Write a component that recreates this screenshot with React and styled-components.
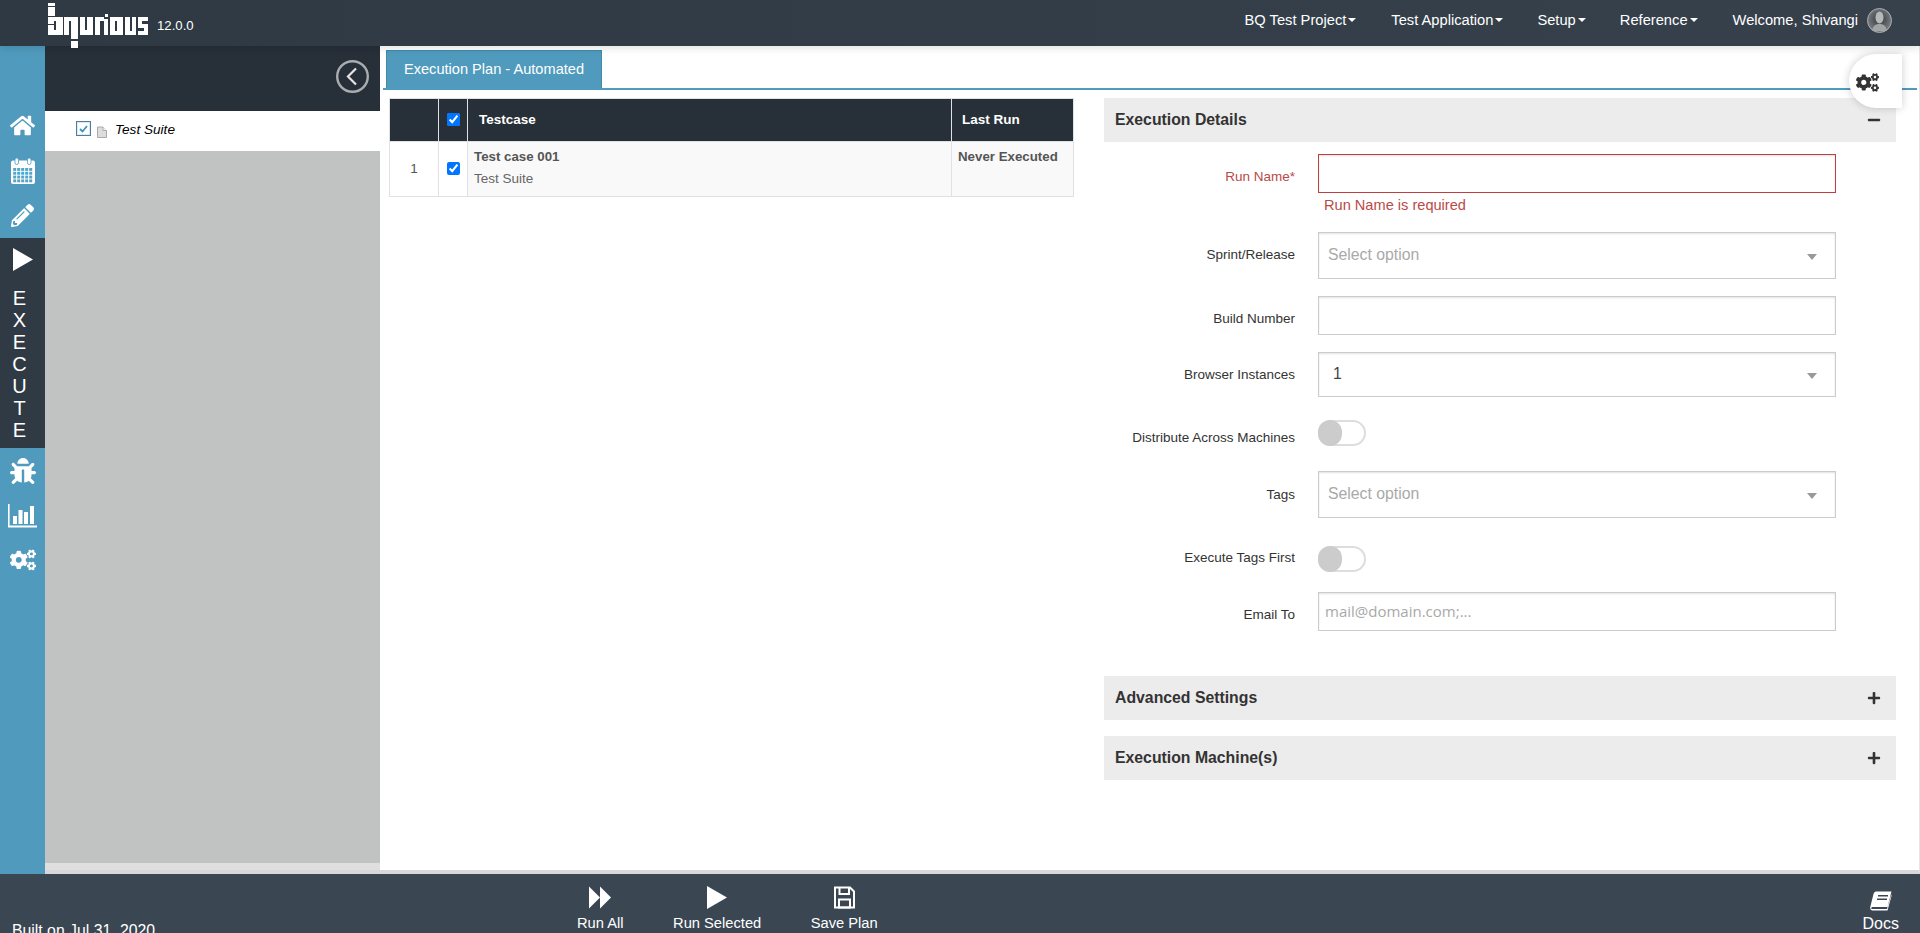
import React from 'react';
import styled, { createGlobalStyle } from 'styled-components';
import { FaHome, FaPencilAlt, FaBug, FaCogs, FaPlus, FaMinus } from 'react-icons/fa';

const GlobalStyle = createGlobalStyle`
  * { box-sizing: border-box; }
  html, body { margin: 0; height: 100%; overflow: hidden; }
  body { font-family: "Liberation Sans", Arial, sans-serif; font-size: 14px; color: #333; background: #fff; }
`;

const Page = styled.div`
  display: flex;
  flex-direction: column;
  height: 933px;
  overflow: hidden;
`;

/* top bar */
const TopBar = styled.header`
  position: relative;
  z-index: 2;
  flex: 0 0 46px;
  height: 46px;
  display: flex;
  align-items: flex-start;
  padding-left: 48px;
  background: linear-gradient(90deg, #2e3944, #36414c);
  color: #fff;
  box-shadow: 0 2px 8px rgba(0, 0, 0, .12);
`;
const LogoMark = styled.svg`
  width: 100px;
  height: 45px;
  margin-top: 3px;
  overflow: visible;
  flex: none;
`;
const Version = styled.span`
  margin: 18px 0 0 9px;
  font-size: 13.200px;
  line-height: 16px;
`;
const Nav = styled.nav`
  margin-left: auto;
  display: flex;
  align-items: center;
  height: 40px;
  padding-right: 28px;
`;
const NavItem = styled.span`
  display: flex;
  align-items: center;
  margin-left: ${p => p.$gap}px;
  font-size: 14.700px;
  white-space: nowrap;
  &::after {
    content: "";
    margin-left: 2px;
    border-top: 4px solid #fff;
    border-left: 4px solid transparent;
    border-right: 4px solid transparent;
  }
`;
const Welcome = styled.span`
  margin-left: 35px;
  font-size: 14.700px;
  white-space: nowrap;
`;
const Avatar = styled.svg`
  width: 25px;
  height: 25px;
  margin-left: 9px;
`;

/* middle */
const Middle = styled.div`
  flex: 1;
  min-height: 0;
  display: flex;
`;
const Rail = styled.aside`
  flex: 0 0 45px;
  display: flex;
  flex-direction: column;
  background: #4f9abd;
  color: #fff;
  padding-top: 56px;
`;
const RailIcon = styled.div`
  height: ${p => p.$h}px;
  display: flex;
  justify-content: center;
  align-items: center;
  font-size: ${p => p.$size}px;
`;
const RailActive = styled.div`
  height: 210px;
  background: #2f3a44;
  display: flex;
  flex-direction: column;
  align-items: center;
  padding: 10px 6px 0 0;
  font-size: 20px;
  svg { margin: 0 -6px 16px 0; }
`;
const RailLetter = styled.span`
  height: 22px;
  line-height: 22px;
`;

const TreePanel = styled.section`
  flex: 0 0 335px;
  display: flex;
  flex-direction: column;
  background: #dfdfdf;
  padding-bottom: 7px;
  border-bottom: 4px solid #d8d8d8;
`;
const TreeHead = styled.div`
  flex: 0 0 65px;
  background: #272f39;
  display: flex;
  justify-content: flex-end;
  padding: 14px 11px 0 0;
`;
const Collapse = styled.svg`
  width: 33px;
  height: 33px;
`;
const TreeRow = styled.div`
  flex: 0 0 40px;
  background: #fff;
  display: flex;
  align-items: center;
  padding: 0 0 3px 31px;
  color: #000;
  font-style: italic;
  font-size: 13.600px;
`;
const TreeCheck = styled.span`
  width: 15px;
  height: 15px;
  margin-bottom: 2px;
  border: 1px solid #4a7ea5;
  box-shadow: inset 0 0 0 1px #dfe9f1;
  display: flex;
  align-items: center;
  justify-content: center;
`;
const DocIcon = styled.svg`
  width: 10px;
  height: 12px;
  margin: 5px 8px 0 6px;
`;
const TreeFill = styled.div`
  flex: 1;
  background: #c1c3c2;
`;

/* main */
const Main = styled.main`
  position: relative;
  flex: 1;
  min-width: 0;
  padding: 4px 2px 0 3px;
  border-bottom: 4px solid #d8d8d8;
  border-right: 1px solid #e4e4e4;
`;
const TabBar = styled.div`
  height: 40px;
  display: flex;
  align-items: flex-end;
  padding-left: 3px;
  border-bottom: 2px solid #4f9abd;
`;
const Tab = styled.div`
  width: 216px;
  height: 38px;
  padding-bottom: 2px;
  background: #4f9abd;
  border: 1px solid #4288a9;
  border-bottom: 0;
  color: #fff;
  font-size: 14.600px;
  display: flex;
  align-items: center;
  justify-content: center;
`;
const GearTab = styled.div`
  position: absolute;
  top: 8px;
  right: 17px;
  width: 53px;
  height: 54px;
  padding: 17px 0 0 7px;
  background: #fff;
  border-radius: 27px 0 0 27px;
  box-shadow: 0 0 8px rgba(0, 0, 0, .2);
  color: #333;
  font-size: 23px;
  line-height: 0;
`;
const Columns = styled.div`
  display: flex;
  padding: 8px 21px 0 6px;
`;
const LeftCol = styled.div`
  flex: 0 0 685px;
`;
const RightCol = styled.div`
  margin-left: 30px;
  flex: 1;
`;
const Table = styled.table`
  width: 685px;
  table-layout: fixed;
  border-collapse: collapse;
  font-size: 13.500px;
`;
const Th = styled.th`
  width: ${p => p.$w ? `${p.$w}px` : 'auto'};
  height: 43px;
  padding: 0 0 2px ${p => p.$pad || 0}px;
  background: #272f39;
  color: #fff;
  text-align: left;
  border: 1px solid #dee2e6;
  font-weight: 700;
`;
const Td = styled.td`
  height: 55px;
  padding: ${p => p.$pad || '0 0 2px'};
  vertical-align: ${p => p.$top ? 'top' : 'middle'};
  text-align: ${p => p.$center ? 'center' : 'left'};
  background: ${p => p.$plain ? '#fff' : '#f9f9f9'};
  border: 1px solid #dee2e6;
  color: #555;
`;
const Check = styled.input`
  display: block;
  margin: 0 auto;
  width: 13px;
  height: 13px;
`;
const CaseName = styled.div`
  font-weight: 700;
  font-size: 13.300px;
  line-height: 20px;
`;
const CaseSuite = styled.div`
  margin-top: 2px;
  line-height: 20px;
  color: #666;
`;

const SectionHead = styled.div`
  height: 44px;
  margin-bottom: ${p => p.$after || 0}px;
  padding: 0 15px 0 11px;
  background: #ececec;
  display: flex;
  align-items: center;
  justify-content: space-between;
  font-size: 15.800px;
  font-weight: 700;
  color: #333;
  svg { font-size: 14px; }
`;
const Form = styled.div`
  padding-top: 12px;
`;
const Field = styled.div`
  display: grid;
  grid-template-columns: 191px 518px;
  column-gap: 23px;
  margin-bottom: ${p => p.$after}px;
`;
const Label = styled.label`
  height: ${p => p.$h}px;
  padding-top: ${p => p.$shift > 0 ? p.$shift : 0}px;
  padding-bottom: ${p => p.$shift < 0 ? -p.$shift : 0}px;
  display: flex;
  align-items: center;
  justify-content: flex-end;
  font-size: 13.500px;
  color: ${p => p.$error ? '#b94a48' : '#333'};
  white-space: nowrap;
`;
const TextBox = styled.input`
  display: block;
  width: 100%;
  height: ${p => p.$h}px;
  padding: 0 6px 2px;
  border: ${p => p.$error ? '1px solid #c13e3e' : '1px solid #ccc'};
  border-radius: 0;
  box-shadow: inset 0 1px 2px rgba(0, 0, 0, .12);
  background: #fff;
  outline: none;
  font-family: "Open Sans", sans-serif;
  font-size: 15px;
  &::placeholder { color: #a9a9a9; opacity: 1; }
`;
const ErrorText = styled.div`
  margin: 3px 0 0 6px;
  height: 19px;
  line-height: 19px;
  font-size: 14.600px;
  color: #b94a48;
`;
const SelectBox = styled.div`
  position: relative;
  height: ${p => p.$h}px;
  padding: 0 ${p => p.$value ? 14 : 9}px 1px;
  border: 1px solid #ccc;
  box-shadow: inset 0 1px 2px rgba(0, 0, 0, .12);
  display: flex;
  align-items: center;
  font-size: 15.800px;
  color: ${p => p.$value ? '#444' : '#a9a9a9'};
  &::after {
    content: "";
    position: absolute;
    right: 18px;
    top: 50%;
    margin-top: -2px;
    border-top: 6px solid #999;
    border-left: 5px solid transparent;
    border-right: 5px solid transparent;
  }
`;
const Toggle = styled.div`
  position: relative;
  width: 48px;
  height: 26px;
  border-radius: 13px;
  background: #fff;
  border: 2px solid #ddd;
  &::before {
    content: "";
    position: absolute;
    left: -2px;
    top: -2px;
    width: 24px;
    height: 26px;
    border-radius: 13px;
    background: #ccc;
  }
`;

/* bottom bar */
const BottomBar = styled.footer`
  flex: 0 0 59px;
  height: 59px;
  position: relative;
  display: flex;
  background: #3a4753;
  color: #fff;
  overflow: hidden;
`;
const BuiltOn = styled.span`
  flex: 0 0 577px;
  padding: 49px 0 0 12px;
  font-size: 15.800px;
  line-height: 16px;
  white-space: nowrap;
`;
const Actions = styled.div`
  display: flex;
  gap: 49.500px;
`;
const Action = styled.div`
  display: flex;
  flex-direction: column;
  align-items: center;
  padding-top: 12px;
  font-size: 14.700px;
  white-space: nowrap;
  svg { height: 23px; }
  span { margin-top: 6px; line-height: 16px; }
`;
const DocsLink = styled(Action)`
  margin-left: auto;
  padding: 17px 21px 0 0;
  font-size: 16px;
  svg { height: 20px; }
  span { margin-top: 5px; }
`;

const LOGO_RECTS = [
  // b
  [0, 0, 7, 3], [0, 4, 7, 9], [0, 14, 15, 4], [0, 18, 6, 3], [0, 22, 6, 5], [8, 18, 7, 14], [0, 27, 15, 5],
  // q
  [16, 14, 14, 4], [16, 18, 5, 9], [23, 18, 7, 18], [16, 27, 5, 5], [23, 38, 7, 7],
  // u
  [32, 14, 5, 18], [39, 14, 6, 18], [32, 27, 13, 5],
  // r
  [47, 14, 5, 18], [47, 14, 9, 4],
  // i
  [57, 11, 3, 3], [56, 16, 4, 16],
  // o
  [62, 14, 5, 18], [69, 14, 6, 18], [62, 14, 13, 4], [62, 28, 13, 4],
  // u
  [77, 14, 5, 18], [84, 14, 4, 18], [77, 28, 11, 4],
  // s
  [90, 14, 10, 4], [90, 14, 4, 10], [90, 21, 10, 4], [96, 21, 4, 11], [90, 28, 10, 4],
];

function Logo() {
  return (
    <LogoMark viewBox="0 0 100 45" aria-label="bqurious">
      {LOGO_RECTS.map(([x, y, w, h], i) => (
        <rect key={i} x={x} y={y} width={w} height={h} fill="#fff" />
      ))}
    </LogoMark>
  );
}

// calendar with the grid showing through, a few cells lighter
function CalendarIcon() {
  const cells = [];
  for (let row = 0; row < 4; row++) {
    for (let col = 0; col < 5; col++) {
      const lit = row === 1 && col > 0 && col < 4;
      cells.push(
        <rect key={`${row}-${col}`} x={2.200 + col * 4} y={10 + row * 3.800} width="3" height="2.900" fill={lit ? '#35aede' : '#5aa3c4'} />
      );
    }
  }
  return (
    <svg width="24" height="26" viewBox="0 0 24 26">
      <rect x="0" y="2.500" width="24" height="23.500" rx="2" fill="#fff" />
      <rect x="4" y="0" width="3.500" height="6.500" rx="1.700" fill="#fff" stroke="#4f9abd" strokeWidth=".8" />
      <rect x="16.500" y="0" width="3.500" height="6.500" rx="1.700" fill="#fff" stroke="#4f9abd" strokeWidth=".8" />
      {cells}
    </svg>
  );
}

function ChartIcon() {
  return (
    <svg width="29" height="24" viewBox="0 0 29 24" fill="#fff">
      <rect x="0" y="0" width="1.600" height="23" />
      <rect x="0" y="21.500" width="29" height="2" />
      <rect x="5" y="12" width="4" height="8" />
      <rect x="10.500" y="6" width="4" height="14" />
      <rect x="16" y="8" width="4" height="12" />
      <rect x="22" y="2" width="4" height="18" />
    </svg>
  );
}

function PlayIcon() {
  return (
    <svg width="20" height="23" viewBox="0 0 20 23" fill="#fff">
      <polygon points="0,0 20,11.500 0,23" />
    </svg>
  );
}

function ForwardIcon() {
  return (
    <svg width="22" height="22" viewBox="0 0 22 22" fill="#fff">
      <polygon points="0,0 11,11 0,22" />
      <polygon points="11,0 22,11 11,22" />
    </svg>
  );
}

function SaveIcon() {
  return (
    <svg width="21" height="22" viewBox="0 0 21 22" fill="none" stroke="#fff" strokeWidth="2">
      <path d="M1 1 H16 L20 5 V21 H1 Z" />
      <path d="M5.500 1 V7.500 H15 V1" />
      <rect x="5" y="13" width="11" height="8" />
    </svg>
  );
}

function BookIcon() {
  return (
    <svg width="22" height="20" viewBox="0 0 22 20">
      <path d="M6 0.500 H21.500 L17.500 16 H3 C1.500 16 1 17 1.500 18 H17 L21.500 3 V5 L17.500 19.500 H2.500 C0.500 19.500 -.3 17.500 .5 15 L3.500 3 C4 1.500 4.800 .5 6 .5 Z" fill="#fff" />
      <rect x="8" y="4" width="10" height="1.500" fill="#3a4753" />
      <rect x="7" y="7.500" width="10" height="1.500" fill="#3a4753" />
    </svg>
  );
}

function Select({ h, children, value }) {
  return <SelectBox $h={h} $value={value}>{children}</SelectBox>;
}

export default function App() {
  return (
    <Page>
      <GlobalStyle />
      <TopBar>
        <Logo />
        <Version>12.0.0</Version>
        <Nav>
          <NavItem $gap={0}>BQ Test Project</NavItem>
          <NavItem $gap={35}>Test Application</NavItem>
          <NavItem $gap={34}>Setup</NavItem>
          <NavItem $gap={34}>Reference</NavItem>
          <Welcome>Welcome, Shivangi</Welcome>
          <Avatar viewBox="0 0 25 25">
            <defs>
              <radialGradient id="av" cx="50%" cy="45%" r="55%">
                <stop offset="0" stopColor="#33363a" />
                <stop offset="1" stopColor="#7d8185" />
              </radialGradient>
            </defs>
            <circle cx="12.500" cy="12.500" r="12" fill="url(#av)" stroke="#a8adb0" />
            <ellipse cx="12.500" cy="9.500" rx="4" ry="6" fill="#b6b8ba" />
            <path d="M5 23 C6 17 9 16 12.500 16 C16 16 19 17 20 23 Z" fill="#a2a4a6" />
          </Avatar>
        </Nav>
      </TopBar>

      <Middle>
        <Rail>
          <RailIcon $h={46} $size={25}><FaHome /></RailIcon>
          <RailIcon $h={45}><CalendarIcon /></RailIcon>
          <RailIcon $h={45} $size={23}><FaPencilAlt /></RailIcon>
          <RailActive>
            <PlayIcon />
            {'EXECUTE'.split('').map((c, i) => <RailLetter key={i}>{c}</RailLetter>)}
          </RailActive>
          <RailIcon $h={46} $size={26}><FaBug /></RailIcon>
          <RailIcon $h={44}><ChartIcon /></RailIcon>
          <RailIcon $h={44} $size={26}><FaCogs /></RailIcon>
        </Rail>

        <TreePanel>
          <TreeHead>
            <Collapse viewBox="0 0 33 33" fill="none">
              <circle cx="16.500" cy="16.500" r="15.300" stroke="#a9adb0" strokeWidth="2.400" />
              <path d="M20 8.500 L12 16.500 L20 24.500" stroke="#e4e4e4" strokeWidth="2.200" />
            </Collapse>
          </TreeHead>
          <TreeRow>
            <TreeCheck>
              <svg width="9" height="8" viewBox="0 0 9 8" fill="none">
                <path d="M1 4 L3.500 6.500 L8 1" stroke="#3f93b8" strokeWidth="1.800" />
              </svg>
            </TreeCheck>
            <DocIcon viewBox="0 0 10 12">
              <path d="M0.500 1 H6 L9.500 4.500 V11.500 H0.500 Z" fill="#ddd" stroke="#aaa" />
              <path d="M6 1 V4.500 H9.500" fill="#fff" stroke="#aaa" />
            </DocIcon>
            Test Suite
          </TreeRow>
          <TreeFill />
        </TreePanel>

        <Main>
          <TabBar><Tab>Execution Plan - Automated</Tab></TabBar>
          <GearTab><FaCogs /></GearTab>
          <Columns>
            <LeftCol>
              <Table>
                <thead>
                  <tr>
                    <Th $w={49} />
                    <Th $w={29}><Check type="checkbox" defaultChecked /></Th>
                    <Th $pad={11}>Testcase</Th>
                    <Th $w={122} $pad={10}>Last Run</Th>
                  </tr>
                </thead>
                <tbody>
                  <tr>
                    <Td $plain $center>1</Td>
                    <Td $plain><Check type="checkbox" defaultChecked /></Td>
                    <Td $top $pad="5px 6px 0">
                      <CaseName>Test case 001</CaseName>
                      <CaseSuite>Test Suite</CaseSuite>
                    </Td>
                    <Td $top $pad="5px 6px 0"><CaseName>Never Executed</CaseName></Td>
                  </tr>
                </tbody>
              </Table>
            </LeftCol>
            <RightCol>
              <SectionHead>Execution Details<FaMinus /></SectionHead>
              <Form>
                <Field $after={17}>
                  <Label $h={39} $error $shift={5}>Run Name*</Label>
                  <div>
                    <TextBox $h={39} $error />
                    <ErrorText>Run Name is required</ErrorText>
                  </div>
                </Field>
                <Field $after={17}>
                  <Label $h={47} $shift={-2}>Sprint/Release</Label>
                  <Select h={47}>Select option</Select>
                </Field>
                <Field $after={17}>
                  <Label $h={39} $shift={5}>Build Number</Label>
                  <TextBox $h={39} />
                </Field>
                <Field $after={23}>
                  <Label $h={45}>Browser Instances</Label>
                  <Select h={45} value>1</Select>
                </Field>
                <Field $after={25}>
                  <Label $h={26} $shift={8}>Distribute Across Machines</Label>
                  <Toggle />
                </Field>
                <Field $after={28}>
                  <Label $h={47}>Tags</Label>
                  <Select h={47}>Select option</Select>
                </Field>
                <Field $after={20}>
                  <Label $h={26} $shift={-4}>Execute Tags First</Label>
                  <Toggle />
                </Field>
                <Field $after={45}>
                  <Label $h={39} $shift={5}>Email To</Label>
                  <TextBox $h={39} placeholder="mail@domain.com;..." />
                </Field>
              </Form>
              <SectionHead $after={16}>Advanced Settings<FaPlus /></SectionHead>
              <SectionHead>Execution Machine(s)<FaPlus /></SectionHead>
            </RightCol>
          </Columns>
        </Main>
      </Middle>

      <BottomBar>
        <BuiltOn>Built on Jul 31, 2020</BuiltOn>
        <Actions>
          <Action><ForwardIcon /><span>Run All</span></Action>
          <Action><PlayIcon /><span>Run Selected</span></Action>
          <Action><SaveIcon /><span>Save Plan</span></Action>
        </Actions>
        <DocsLink><BookIcon /><span>Docs</span></DocsLink>
      </BottomBar>
    </Page>
  );
}
